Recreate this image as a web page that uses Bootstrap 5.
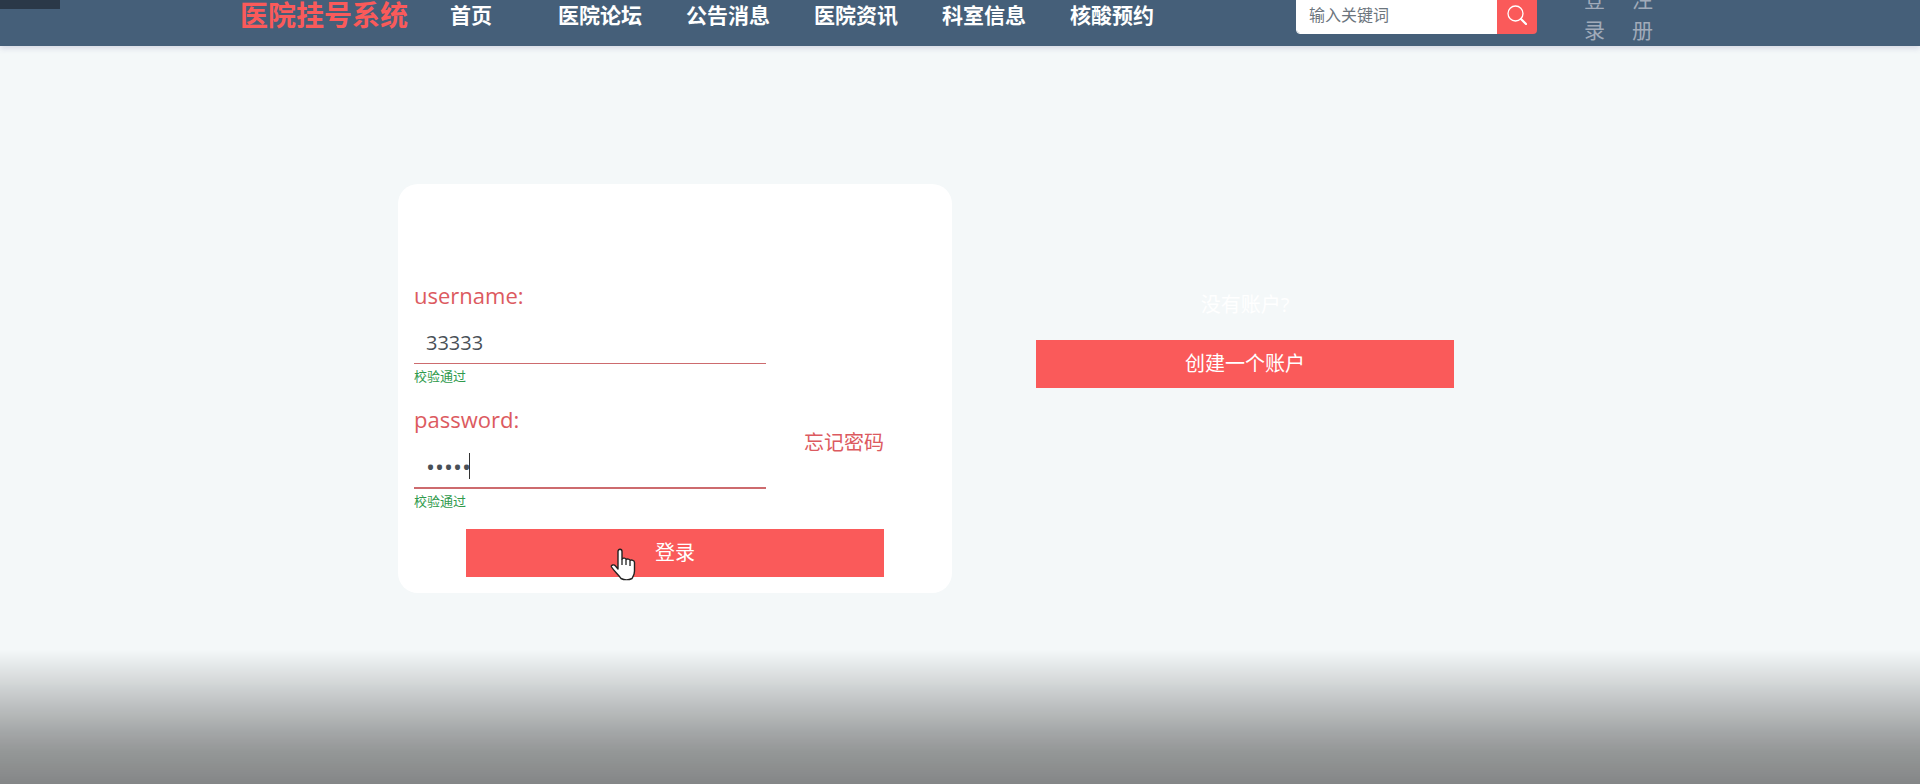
<!DOCTYPE html>
<html lang="zh-CN">
<head>
<meta charset="utf-8">
<meta name="viewport" content="width=device-width, initial-scale=1">
<title>医院挂号系统</title>
<link href="https://cdn.jsdelivr.net/npm/bootstrap@5.3.0/dist/css/bootstrap.min.css" rel="stylesheet">
<style>
  body { background: #f4f8f9; font-family: "Open Sans", "Noto Sans CJK SC", sans-serif; font-size: 20px; line-height: 28px; }
  .site-header { background: #455f79; height: 62px; margin-top: -16px; box-shadow: 0 2px 6px rgba(70, 70, 130, .2); }
  .header-inner { width: 75%; padding-bottom: 1px; }
  .brand-link { color: #fa5a5a; font-size: 28px; line-height: 36px; font-weight: 700; white-space: nowrap; }
  .main-menu { margin-left: 20px; font-size: 21px; font-weight: 700; white-space: nowrap; }
  .main-menu .nav-link { color: #fff; padding: 0 22px; }
  .main-menu .home-link { width: 108px; }
  .search-box { width: 241px; height: 38px; margin-left: 120px; }
  .search-box .form-control { border: 1px solid #fff; font-size: 16px; padding: 0 12px; border-radius: 4px 0 0 4px; }
  .search-box .form-control::placeholder { color: #6c757d; }
  .search-box .btn { width: 40px; padding: 0; background: #fa5a5a; border: 0; border-radius: 0 4px 4px 0; }
  .account-links { gap: 27px; margin-left: 47px; font-size: 21px; line-height: 31px; }
  .account-links a { color: #a1abb9; width: 21px; word-break: break-all; }
  .page-main { max-width: 1140px; padding-top: 138px; }
  .login-card { border: 0; border-radius: 20px; padding: 95px 16px 16px; }
  .field-label { color: #dc5a60; font-size: 22px; line-height: 32px; }
  .field-area { width: 352px; }
  .field-input { height: 53px; border: 0; border-bottom: 1px solid #cd6b6e; border-radius: 0; padding: 17px 12px 7px; font-size: 20px; line-height: 28px; color: #495057; background: transparent; }
  .field-input.active-input { border-bottom-width: 2px; height: 54px; font-size: 24px; }
  .text-caret { left: 55px; top: 18px; width: 1px; height: 26px; background: #333; }
  .check-note { color: #2f9a4c; font-size: 13px; line-height: 25px; }
  .password-row { padding-top: 14px; }
  .forgot-link { color: #dc5a60; margin-right: 52px; margin-bottom: 32px; }
  .btn-action { width: 80%; height: 48px; padding: 0; background: #fa5a5a; color: #fff; border: 0; border-radius: 0; font-size: 20px; }
  .login-actions { padding-top: 15px; }
  .signup-side { padding-top: 107px; }
  .signup-side p { margin-bottom: 21px; }
  .hand-pointer { left: 196px; top: 34px; }
  .bottom-fade { height: 134px; pointer-events: none; z-index: 5;
    background: linear-gradient(rgba(0,0,0,0), rgba(0,0,0,.2) 37%, rgba(0,0,0,.32) 60%, rgba(0,0,0,.39) 75%, rgba(0,0,0,.46)); }
  .corner-tag { width: 60px; height: 9px; background: #2a3848; z-index: 6; }
</style>
</head>
<body>
<div class="corner-tag position-fixed top-0 start-0"></div>
<header class="site-header">
  <div class="header-inner h-100 mx-auto d-flex align-items-center">
    <a class="brand-link text-decoration-none" href="#">医院挂号系统</a>
    <nav class="main-menu nav flex-nowrap">
      <a class="nav-link home-link" href="#">首页</a>
      <a class="nav-link" href="#">医院论坛</a>
      <a class="nav-link" href="#">公告消息</a>
      <a class="nav-link" href="#">医院资讯</a>
      <a class="nav-link" href="#">科室信息</a>
      <a class="nav-link" href="#">核酸预约</a>
    </nav>
    <form class="search-box input-group flex-nowrap flex-shrink-0">
      <input type="text" class="form-control" placeholder="输入关键词" aria-label="输入关键词">
      <button type="button" class="btn d-flex align-items-center justify-content-center" aria-label="搜索">
        <svg width="20" height="20" viewBox="0 0 20 20" fill="none" stroke="#fff"><circle cx="8.500" cy="8.500" r="7.500" stroke-width="1.300"/><path d="M14 14l5 5" stroke-width="2.200" stroke-linecap="round"/></svg>
      </button>
    </form>
    <div class="account-links d-flex">
      <a class="text-decoration-none" href="#">登录</a>
      <a class="text-decoration-none" href="#">注册</a>
    </div>
  </div>
</header>

<main class="page-main container px-0">
  <div class="row g-0">
    <div class="col-6 px-2">
      <form class="login-card card">
        <div class="field-area">
          <label class="field-label d-block" for="username">username:</label>
          <input id="username" type="text" class="field-input form-control" value="33333">
          <div class="check-note">校验通过</div>
        </div>
        <div class="password-row d-flex justify-content-between align-items-center">
          <div class="field-area">
            <label class="field-label d-block" for="password">password:</label>
            <div class="position-relative">
              <input id="password" type="password" class="field-input active-input form-control" value="33333">
              <span class="text-caret position-absolute"></span>
            </div>
            <div class="check-note">校验通过</div>
          </div>
          <a class="forgot-link text-decoration-none" href="#">忘记密码</a>
        </div>
        <div class="login-actions position-relative text-center">
          <button type="button" class="btn btn-action">登录</button>
          <svg class="hand-pointer position-absolute" width="26" height="34" viewBox="0 0 26 34"><path d="M8 21V3.500C8 .5 12 .5 12 3.500V11c1-1.500 4-1 4 .5 1-1 4-.5 4 1 1.500-1 4.500 0 4.500 2V23c0 4-1.500 5-2.500 7.500-3 1.500-8 1.500-11 0C9 27 4 23 1.500 19 .5 17 4 16 5.500 18Z" fill="#fff" stroke="#222" stroke-width="1.400" stroke-linejoin="round"/><path d="M12 11v6M16 12v5M20 13v5" stroke="#222" stroke-width="1.300"/></svg>
        </div>
      </form>
    </div>
    <div class="signup-side col-6 px-4 text-center text-white">
      <p>没有账户?</p>
      <button type="button" class="btn btn-action">创建一个账户</button>
    </div>
  </div>
</main>
<div class="bottom-fade position-fixed bottom-0 start-0 end-0"></div>
<script src="https://cdn.jsdelivr.net/npm/bootstrap@5.3.0/dist/js/bootstrap.bundle.min.js"></script>
</body>
</html>
